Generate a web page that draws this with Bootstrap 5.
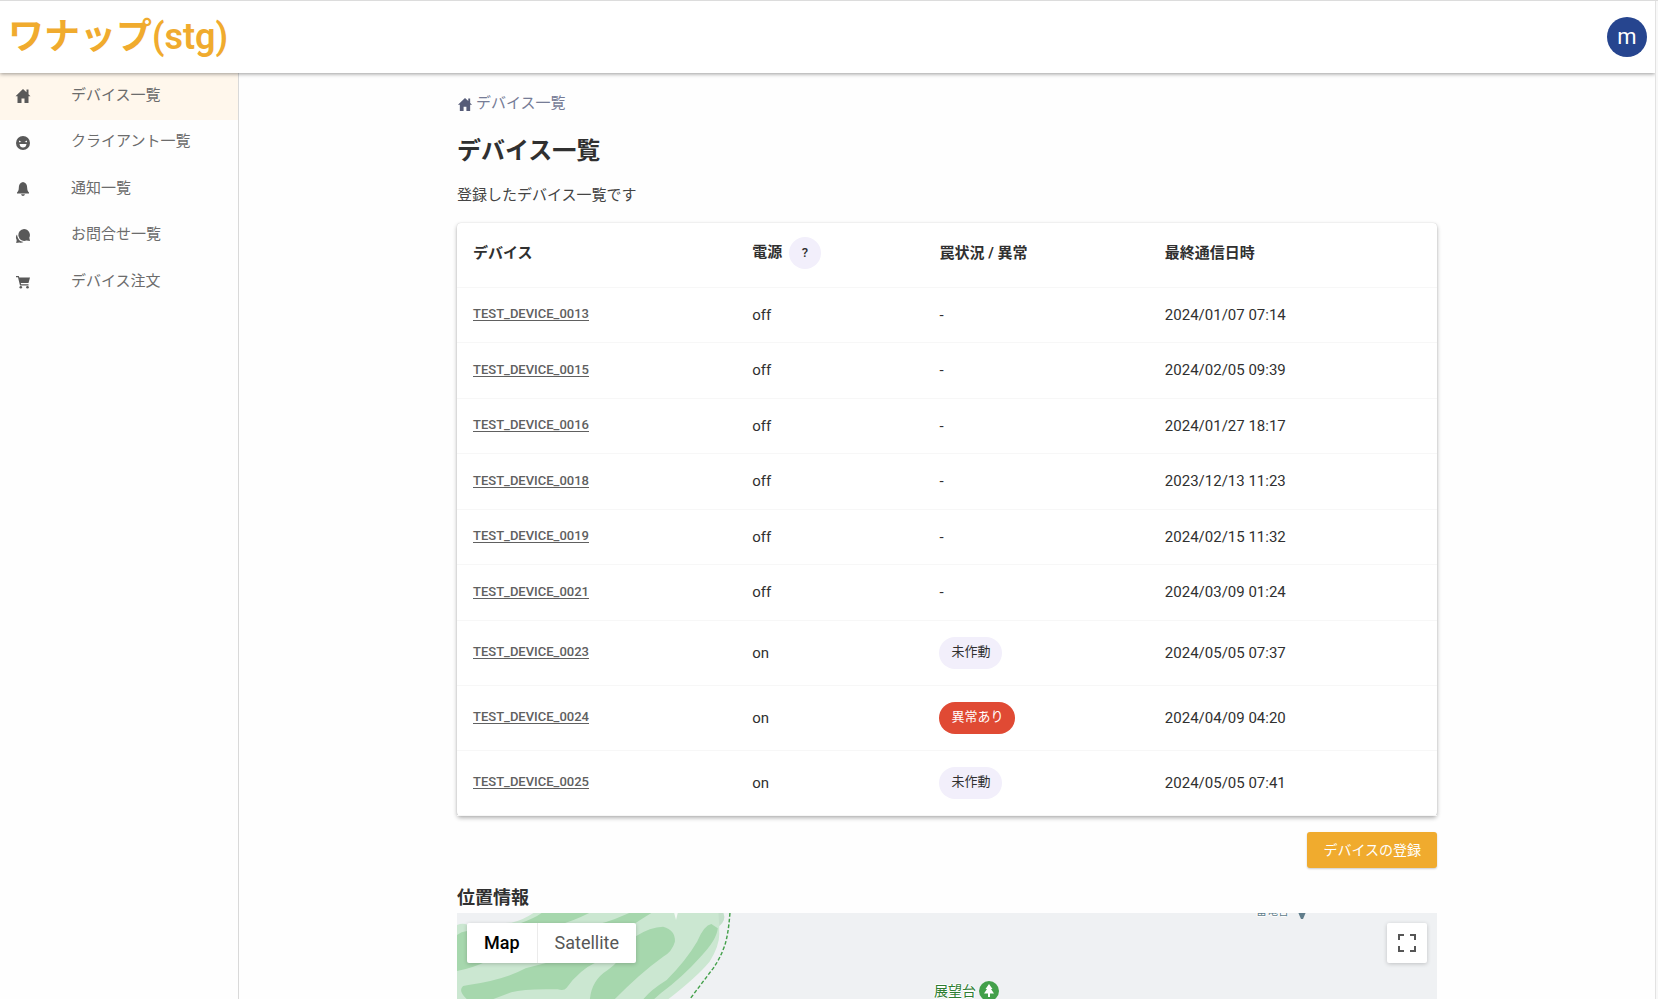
<!DOCTYPE html>
<html lang="ja">
<head>
<meta charset="utf-8">
<meta name="viewport" content="width=device-width, initial-scale=1">
<title>デバイス一覧</title>
<link href="https://cdn.jsdelivr.net/npm/bootstrap@5.3.0/dist/css/bootstrap.min.css" rel="stylesheet">
<style>
  body { font-family: Roboto, "Noto Sans CJK JP", sans-serif; font-size: 15px; line-height: 24px; color: #303030; background: #fefefe; border-top: 1px solid #dcdcdc; }
  .scroll-gutter { width: 3px; background: #f8f8f8; border-left: 1px solid #e2e2e2; }
  .app-header { height: 72px; padding: 0 8px; background: #fff; box-shadow: 0 1px 4px rgba(0,0,0,.4); z-index: 2; }
  .brand { font-size: 36px; line-height: 48px; font-weight: 600; color: #f0ab2e; }
  .avatar { width: 40px; height: 40px; background: #26458f; color: #fff; font-size: 22px; line-height: 38px; }
  .side { width: 239px; border-right: 1px solid #d9d9d9; }
  .side a { height: 47px; padding: 0 15px 4px; gap: 40px; color: #6c6c6c; }
  .side a:nth-child(even) { height: 46px; }
  .side a.active { background: #fff7ec; }
  .side svg { width: 16px; height: 16px; fill: #595959; margin-top: 3px; }
  .content { max-width: 980px; padding-top: 18px; }
  .crumb { color: #767c96; gap: 3px; }
  .crumb svg { fill: #565c78; margin-top: 3px; }
  h1 { font-size: 24px; line-height: 32px; font-weight: 700; margin: 20px 0 16px; }
  h2 { font-size: 18px; line-height: 24px; font-weight: 700; margin: 18px 0 3px; }
  .intro { margin-bottom: 16px; color: #444; }
  .device-card { background: #fff; border-radius: 4px; box-shadow: 0 2px 4px rgba(0,0,0,.3), 0 0 1px rgba(0,0,0,.2); }
  .device-card th { font-weight: 700; }
  .device-card .table { --bs-table-bg: transparent; --bs-table-color: #303030; table-layout: fixed; }
  .device-card .table > * > tr > * { padding: 0 16px; vertical-align: middle; border-bottom: 1px solid #f7f7f7; }
  .device-card .table > thead > tr > th { padding-bottom: 3px; }
  .device-card thead tr { height: 64px; }
  .device-card tbody tr { height: 55px; }
  .device-card tbody tr:nth-child(even) { height: 56px; }
  .device-card tbody tr.armed { height: 65px; }
  .device-card .table > tbody > tr > td:first-child { padding-bottom: 2px; }
  .device-card tbody a { font-size: 13px; font-weight: 500; color: #606060; text-underline-offset: 2px; }
  .chip { display: inline-block; height: 32px; padding: 0 12px; border: 0; border-radius: 16px; background: #f2effb; color: #303030; font-size: 13px; line-height: 30px; }
  .chip-alert { background: #e04a34; color: #fff; }
  .chip-help { width: 32px; padding: 0; margin-left: 3px; font-weight: 500; }
  .btn-add { background: #f0ab2e; color: #fff; border: 0; border-radius: 3px; font-size: 14px; line-height: 20px; padding: 8px 16px; margin-top: 16px; box-shadow: 0 1px 2px rgba(0,0,0,.2); }
  .map { background: #eff1f3; min-height: 86px; }
  .map-types { top: 10px; left: 10px; box-shadow: 0 1px 4px rgba(0,0,0,.2); border-radius: 2px; background: #fff; }
  .map-types button { height: 40px; padding: 0 17px; border: 0; background: transparent; font-size: 18px; color: #565656; }
  .map-types button.active { color: #000; font-weight: 500; border-right: 1px solid #ebebeb; }
  .map-full { top: 10px; right: 10px; width: 40px; height: 40px; border: 0; border-radius: 2px; background: #fff; box-shadow: 0 1px 4px rgba(0,0,0,.2); }
  .place { font-size: 14px; line-height: 20px; color: #2e7d32; text-shadow: 1px 0 #fff, -1px 0 #fff, 0 1px #fff, 0 -1px #fff; }
  .place-park { left: 477px; top: 68px; gap: 3px; }
  .place-valley { left: 799px; top: -9px; gap: 9px; font-size: 11px; line-height: 16px; color: #607d8b; }
</style>
</head>
<body class="vh-100 d-flex overflow-hidden">
<svg class="d-none">
  <symbol id="house" viewBox="0 0 16 16"><path d="M8 1 .5 8.3h2V15h4v-4.500h3V15h4V8.300h2L13.500 6.300V1.500h-2v2.700z"/></symbol>
</svg>
<div class="d-flex flex-column flex-grow-1 overflow-hidden">
  <header class="app-header d-flex align-items-center justify-content-between flex-shrink-0 position-relative">
    <a class="brand text-decoration-none" href="#">ワナップ(stg)</a>
    <button class="avatar rounded-circle border-0 p-0" type="button">m</button>
  </header>
  <div class="d-flex flex-grow-1 overflow-hidden">
    <nav class="side flex-shrink-0">
      <a class="active d-flex align-items-center text-decoration-none" href="#"><svg><use href="#house"/></svg>デバイス一覧</a>
      <a class="d-flex align-items-center text-decoration-none" href="#"><svg viewBox="0 0 16 16"><circle cx="8" cy="8" r="7"/><g fill="#fefefe"><path d="M4 5.500 6.500 7 4 7.300zM12 5.500 9.500 7l2.500.3zM4.500 9h7q-.5 3.500-3.500 3.500T4.500 9z"/></g></svg>クライアント一覧</a>
      <a class="d-flex align-items-center text-decoration-none" href="#"><svg viewBox="0 0 16 16"><path d="M8 1C5 1.500 3.800 4 3.800 7c0 2-.8 3.500-1.800 4.500v1h12v-1c-1-1-1.800-2.500-1.800-4.500C12.200 4 11 1.500 8 1zM6 13.200h4Q9.500 15 8 15t-2-1.800z"/></svg>通知一覧</a>
      <a class="d-flex align-items-center text-decoration-none" href="#"><svg viewBox="0 0 16 16"><path d="M9 1a6 6 0 1 0 2.500 11.600L15 13l-.7-3.300A6 6 0 0 0 9 1z"/><path d="M2 6.500Q0 9 1.700 12L1.200 15l3.300-.4q2 .6 4-.5Q2.500 13 2 6.500z"/></svg>お問合せ一覧</a>
      <a class="d-flex align-items-center text-decoration-none" href="#"><svg viewBox="0 0 16 16"><path d="M1 2h2.800l.5 1.500H15L13.500 9H5.800l.3 1.300h7.400v1.200H5L3 3.200H1z"/><circle cx="5.800" cy="13.300" r="1.300"/><circle cx="12.500" cy="13.300" r="1.300"/></svg>デバイス注文</a>
    </nav>
    <main class="flex-grow-1 overflow-hidden d-flex">
      <div class="content w-100 mx-auto d-flex flex-column">
        <a class="crumb d-flex align-items-center text-decoration-none" href="#"><svg width="16" height="15"><use href="#house"/></svg>デバイス一覧</a>
        <h1>デバイス一覧</h1>
        <p class="intro">登録したデバイス一覧です</p>
        <div class="device-card">
          <table class="table mb-0">
            <colgroup><col style="width:28.500%"><col style="width:19.100%"><col style="width:23%"><col></colgroup>
            <thead><tr><th scope="col">デバイス</th><th scope="col">電源 <button class="chip chip-help" type="button">?</button></th><th scope="col">罠状況 / 異常</th><th scope="col">最終通信日時</th></tr></thead>
            <tbody>
              <tr><td><a href="#">TEST_DEVICE_0013</a></td><td>off</td><td>-</td><td>2024/01/07 07:14</td></tr>
              <tr><td><a href="#">TEST_DEVICE_0015</a></td><td>off</td><td>-</td><td>2024/02/05 09:39</td></tr>
              <tr><td><a href="#">TEST_DEVICE_0016</a></td><td>off</td><td>-</td><td>2024/01/27 18:17</td></tr>
              <tr><td><a href="#">TEST_DEVICE_0018</a></td><td>off</td><td>-</td><td>2023/12/13 11:23</td></tr>
              <tr><td><a href="#">TEST_DEVICE_0019</a></td><td>off</td><td>-</td><td>2024/02/15 11:32</td></tr>
              <tr><td><a href="#">TEST_DEVICE_0021</a></td><td>off</td><td>-</td><td>2024/03/09 01:24</td></tr>
              <tr class="armed"><td><a href="#">TEST_DEVICE_0023</a></td><td>on</td><td><span class="chip">未作動</span></td><td>2024/05/05 07:37</td></tr>
              <tr class="armed"><td><a href="#">TEST_DEVICE_0024</a></td><td>on</td><td><span class="chip chip-alert">異常あり</span></td><td>2024/04/09 04:20</td></tr>
              <tr class="armed"><td><a href="#">TEST_DEVICE_0025</a></td><td>on</td><td><span class="chip">未作動</span></td><td>2024/05/05 07:41</td></tr>
            </tbody>
          </table>
        </div>
        <button class="btn btn-add align-self-end" type="button">デバイスの登録</button>
        <h2>位置情報</h2>
        <div class="map position-relative overflow-hidden flex-grow-1">
          <svg class="d-block" width="543" height="86" viewBox="48 159 1520 258" preserveAspectRatio="none">
            <path fill="#cbe7d1" d="M48 195Q65 188 78 195L200 188Q230 182 262 159H782V215Q785 255 755 305 720 350 640 417H48z"/>
            <path fill="#c3dfca" d="M780 159h14q8 22-12 40z"/>
            <g fill="#a6d7ad">
              <path d="M220 192Q265 175 285 159H418Q370 185 330 195zM445 192Q470 185 490 177L530 159H592Q560 180 540 195z"/>
              <path d="M48 225Q60 215 76 213L140 300Q90 325 48 333z"/>
              <path d="M80 375Q180 360 240 325L310 305H440Q390 330 355 383 348 394 330 388 240 385 200 397L150 417H75Q50 392 65 378z"/>
              <path d="M420 417Q425 360 470 330 510 300 530 250L546 230Q590 200 625 200 660 210 658 245 650 275 625 290 560 340 490 417z"/>
              <path d="M570 417Q590 390 635 360 690 300 720 245 740 195 760 192L778 205Q775 240 730 290 680 350 620 398L600 417z"/>
            </g>
            <path fill="#f5faf6" d="M656 159 661 180 666 159z"/>
            <path fill="none" stroke="#43a04a" stroke-width="4" stroke-dasharray="11 6" d="M812 159Q808 220 798 255 785 295 765 325L700 417"/>
          </svg>
          <div class="map-types position-absolute d-flex"><button class="active" type="button">Map</button><button type="button">Satellite</button></div>
          <button class="map-full position-absolute p-0" type="button" aria-label="Fullscreen"><svg class="d-block mx-auto" width="18" height="18" fill="none" stroke="#565656" stroke-width="2"><path d="M1 6V1h5M12 1h5v5M17 12v5h-5M6 17H1v-5"/></svg></button>
          <div class="place place-valley position-absolute d-flex">雷電台<svg width="8" height="18"><path fill="#607d8b" d="M0 8h8L5 15H3z"/></svg></div>
          <div class="place place-park position-absolute d-flex">展望台<svg width="20" height="20"><circle cx="10" cy="10" r="10" fill="#43a04a"/><path fill="#fff" d="m10 3 3.500 5H12l3 4.500h-4V16H9v-3.500H5L8 8H6.500z"/></svg></div>
        </div>
      </div>
    </main>
  </div>
</div>
<div class="scroll-gutter flex-shrink-0"></div>
<script src="https://cdn.jsdelivr.net/npm/bootstrap@5.3.0/dist/js/bootstrap.bundle.min.js"></script>
</body>
</html>
